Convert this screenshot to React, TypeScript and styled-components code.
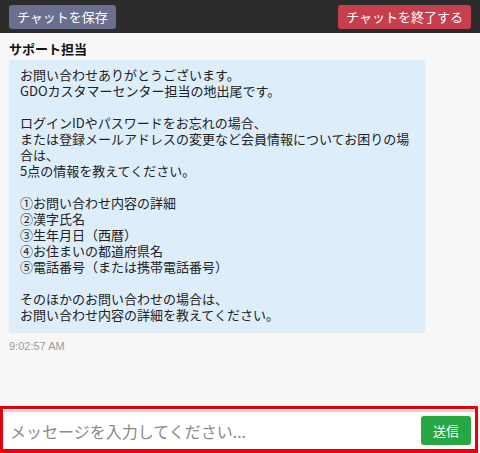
import React from "react";
import styled, { createGlobalStyle } from "styled-components";

const GlobalStyle = createGlobalStyle`
  html, body {
    margin: 0;
    padding: 0;
    background: #f7f7f7;
    font-family: "Noto Sans CJK JP", "Noto Sans", "Liberation Sans", sans-serif;
  }
`;

const Page = styled.div`
  width: 480px;
  height: 453px;
  display: flex;
  flex-direction: column;
  background: #f7f7f7;
  overflow: hidden;
`;

const Header = styled.div`
  height: 33px;
  box-sizing: border-box;
  padding: 5px 9px 4px 9px;
  background: #2c2c2c;
  display: flex;
  justify-content: space-between;
  align-items: flex-start;
`;

const HeaderButton = styled.button<{ $tone: "save" | "end" }>`
  height: 24px;
  padding: 0 8px;
  border: none;
  border-radius: 3px;
  background: ${(p) => (p.$tone === "save" ? "#6a6f8f" : "#c73f4d")};
  color: #fff;
  font-family: inherit;
  font-size: 13px;
  line-height: 24px;
  cursor: pointer;
`;

const Messages = styled.div`
  flex: 1;
  padding: 7px 9px 0;
  display: flex;
  flex-direction: column;
  align-items: flex-start;
`;

const Sender = styled.div`
  font-size: 13px;
  font-weight: bold;
  color: #111;
  line-height: 18px;
  margin-bottom: 2px;
`;

const Bubble = styled.div`
  width: 416px;
  box-sizing: border-box;
  padding: 7px 11px 9px;
  background: #ddedf9;
  border-radius: 3px;
  box-shadow: 0 1px 1px rgba(0, 0, 0, 0.06);
  font-size: 13px;
  line-height: 16px;
  color: #222;
  white-space: pre-wrap;
`;

const Time = styled.div`
  margin-top: 8px;
  font-family: "Liberation Sans", Arial, sans-serif;
  font-size: 11px;
  color: #9a9a9a;
`;

const Footer = styled.div`
  height: 47px;
  box-sizing: border-box;
  margin-right: 2px;
  border: 3px solid #e8000b;
  border-bottom-width: 4px;
  background: #fff;
  display: flex;
  flex-direction: column;
`;

const Divider = styled.div`
  height: 2px;
  background: #d3d3dc;
  margin-top: 1px;
`;

const InputRow = styled.div`
  flex: 1;
  display: flex;
  align-items: center;
  padding: 0 4px 0 7px;
  gap: 8px;
`;

const MessageInput = styled.input`
  flex: 1;
  border: none;
  outline: none;
  background: transparent;
  font-family: inherit;
  font-size: 16px;
  color: #333;
  padding: 0;

  &::placeholder {
    color: #8a8a8a;
  }
`;

const SendButton = styled.button`
  width: 50px;
  height: 29px;
  border: none;
  border-radius: 3px;
  background: #28a745;
  color: #fff;
  font-family: inherit;
  font-size: 13px;
  cursor: pointer;
`;

const messageText = `お問い合わせありがとうございます。
GDOカスタマーセンター担当の地出尾です。

ログインIDやパスワードをお忘れの場合、
または登録メールアドレスの変更など会員情報についてお困りの場合は、
5点の情報を教えてください。

①お問い合わせ内容の詳細
②漢字氏名
③生年月日（西暦）
④お住まいの都道府県名
⑤電話番号（または携帯電話番号）

そのほかのお問い合わせの場合は、
お問い合わせ内容の詳細を教えてください。`;

export default function App() {
  return (
    <>
      <GlobalStyle />
      <Page>
        <Header>
          <HeaderButton $tone="save">チャットを保存</HeaderButton>
          <HeaderButton $tone="end">チャットを終了する</HeaderButton>
        </Header>
        <Messages>
          <Sender>サポート担当</Sender>
          <Bubble>{messageText}</Bubble>
          <Time>9:02:57 AM</Time>
        </Messages>
        <Footer>
          <Divider />
          <InputRow>
            <MessageInput placeholder="メッセージを入力してください..." />
            <SendButton>送信</SendButton>
          </InputRow>
        </Footer>
      </Page>
    </>
  );
}
